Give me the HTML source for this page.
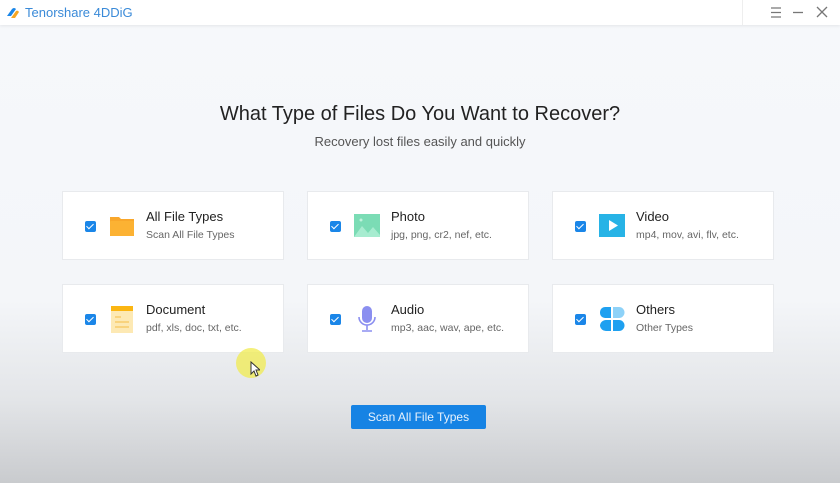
<!DOCTYPE html>
<html><head><style>
*{margin:0;padding:0;box-sizing:border-box}
body{width:840px;height:483px;overflow:hidden;font-family:"Liberation Sans",sans-serif;background:linear-gradient(#f6f8fb 0px,#f4f6f9 300px,#e3e5e8 400px,#c9cbce 483px);position:relative}
.tb{position:absolute;left:0;top:0;width:840px;height:25px;background:#fff;box-shadow:0 1px 3px rgba(0,0,0,.08)}
.tb .t{position:absolute;left:25px;top:5px;font-size:13px;color:#3a8ad8}
.tb .div{position:absolute;left:742px;top:0;width:1px;height:25px;background:#eee}
.h1{position:absolute;top:103px;width:840px;text-align:center;font-size:20px;color:#222}
.h2{position:absolute;top:134px;width:840px;text-align:center;font-size:13px;color:#555}
.card{position:absolute;width:222px;height:69px;background:#fff;border:1px solid #e8eaed}
.cb{position:absolute;left:22px;top:29px;width:11px;height:11px;background:#1a86e8;border-radius:2px}
.cb:after{content:"";position:absolute;left:3px;top:1px;width:3px;height:6px;border:solid #fff;border-width:0 1.6px 1.6px 0;transform:rotate(45deg)}
.ic{position:absolute;left:46px;top:21px;width:26px;height:26px}
.n{position:absolute;left:83px;top:17px;font-size:13px;color:#222}
.s{position:absolute;left:83px;top:37px;font-size:10.5px;color:#666}
.btn{position:absolute;left:351px;top:405px;width:135px;height:24px;background:#1683e4;border-radius:2px;color:#e8f2fc;font-size:12px;text-align:center;line-height:24px}
</style></head><body>
<div class="tb">
<svg style="position:absolute;left:5px;top:5px" width="16" height="16" viewBox="0 0 16 16"><path d="M2 11 L7 4 Q9 2 11 4 L6 11Z" fill="#1a86e8"/><path d="M6 13 L11 6 Q13 5 14 7 L10 13Z" fill="#f5a623"/></svg>
<div class="t">Tenorshare 4DDiG</div>
<div class="div"></div>
<svg style="position:absolute;left:770px;top:6px" width="60" height="13" viewBox="0 0 60 13"><g stroke="#777" stroke-width="1.3" fill="none"><path d="M1 2h10M1 6.5h10M1 11h10"/><path d="M23 6.5h10"/><path d="M47 1l10 10M57 1l-10 10"/></g></svg>
</div>
<div class="h1">What Type of Files Do You Want to Recover?</div>
<div class="h2">Recovery lost files easily and quickly</div>

<div class="card" style="left:62px;top:191px"><div class="cb"></div>
<svg class="ic" viewBox="0 0 26 26"><path d="M1 4h9l2 2h13v17H1z" fill="#f9a72b"/><rect x="1" y="8" width="24" height="15" rx="1" fill="#fcb233"/></svg>
<div class="n">All File Types</div><div class="s">Scan All File Types</div></div>

<div class="card" style="left:307px;top:191px"><div class="cb"></div>
<svg class="ic" viewBox="0 0 26 26"><rect x="0" y="1" width="26" height="23" fill="#7bdcb5"/><path d="M0 24 L8 13 L14 20 L19 14 L26 22 V24Z" fill="#a7ecd0"/><circle cx="7" cy="7" r="1.5" fill="#bff2dc"/></svg>
<div class="n">Photo</div><div class="s">jpg, png, cr2, nef, etc.</div></div>

<div class="card" style="left:552px;top:191px"><div class="cb"></div>
<svg class="ic" viewBox="0 0 26 26"><rect x="0" y="1" width="26" height="23" fill="#27b3e6"/><path d="M10 7v11l9-5.5z" fill="#fff"/></svg>
<div class="n">Video</div><div class="s">mp4, mov, avi, flv, etc.</div></div>

<div class="card" style="left:62px;top:284px"><div class="cb"></div>
<svg class="ic" viewBox="0 0 26 26" style="top:20px;height:28px"><rect x="2" y="0" width="22" height="28" fill="#fde9b4"/><rect x="2" y="0" width="22" height="5" fill="#fbb612"/><path d="M6 11h6M6 16h14M6 21h14" stroke="#f8cc6b" stroke-width="1.5"/></svg>
<div class="n">Document</div><div class="s">pdf, xls, doc, txt, etc.</div></div>

<div class="card" style="left:307px;top:284px"><div class="cb"></div>
<svg class="ic" viewBox="0 0 26 26" style="top:18px;height:30px"><rect x="8" y="1" width="10" height="17" rx="5" fill="#8b8ff0"/><path d="M5 12a8 8 0 0 0 16 0M13 20v5M8 26h10" stroke="#8b8ff0" stroke-width="1.6" fill="none"/></svg>
<div class="n">Audio</div><div class="s">mp3, aac, wav, ape, etc.</div></div>

<div class="card" style="left:552px;top:284px"><div class="cb"></div>
<svg class="ic" viewBox="0 0 26 26"><path d="M1 6a5 5 0 0 1 5-5h6v11H6a5 5 0 0 1-5-5z" fill="#1ea0f0"/><path d="M14 1h6a5 5 0 0 1 0 11h-6z" fill="#8ed2f8"/><path d="M1 20a6 6 0 0 1 6-6h5v11H7a6 6 0 0 1-6-5z" fill="#1ea0f0"/><path d="M14 14h6a5.5 5.5 0 0 1 0 11h-6z" fill="#1ea0f0"/></svg>
<div class="n">Others</div><div class="s">Other Types</div></div>

<div style="position:absolute;left:236px;top:348px;width:30px;height:30px;border-radius:50%;background:rgba(240,235,80,.75)"></div>
<svg style="position:absolute;left:250px;top:361px" width="10" height="16" viewBox="0 0 10 16"><path d="M1 1v12l3-3 2 5 2-1-2-5h4z" fill="#fff" stroke="#333" stroke-width="1"/></svg>
<div class="btn">Scan All File Types</div>
</body></html>
